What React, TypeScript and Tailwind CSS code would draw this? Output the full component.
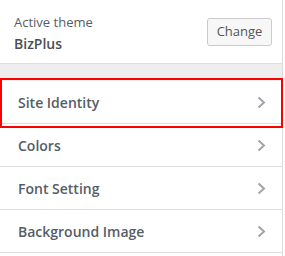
const sections = ['Site Identity', 'Colors', 'Font Setting', 'Background Image'];

function Chevron() {
  return (
    <svg width="9" height="13" viewBox="0 0 9 13" fill="none" className="text-[#a0a5aa]">
      <path d="M1.5 1.5 7 6.5 1.5 11.5" stroke="currentColor" strokeWidth="2" />
    </svg>
  );
}

/** Customizer panel: active theme header and a list of section rows. */
export default function App() {
  return (
    <div className="h-[256px] w-[285px] bg-white" style={{ fontFamily: '"Open Sans", "Noto Sans", sans-serif' }}>
      <div className="relative h-full w-[283px] border-r border-[#dcdcdc] bg-white">
        <div className="flex h-[64px] items-center justify-between border-b border-[#dddddd] bg-white pl-[14px] pr-[10px]">
          <div className="flex flex-col pt-[2px]">
            <span className="text-[13px] leading-[21px] text-[#555d66]">Active theme</span>
            <span className="text-[14px] font-semibold leading-[21px] text-[#4a4f55]">BizPlus</span>
          </div>
          <button className="h-[28px] w-[65px] rounded-[3px] border border-[#cccccc] bg-[#f7f7f7] text-[13px] text-[#555555]">
            Change
          </button>
        </div>

        <div className="h-[17px] bg-[#eeeeee]" />

        <ul>
          {sections.map((s) => (
            <li
              key={s}
              className="flex h-[43px] items-center justify-between border-b border-[#dddddd] bg-white pl-[18px] pr-[16px]"
            >
              <span className="text-[14px] font-semibold text-[#555d66]">{s}</span>
              <Chevron />
            </li>
          ))}
        </ul>

        <div className="pointer-events-none absolute left-0 top-[78px] h-[50px] w-[283px] border-2 border-[#ff0000]" />
      </div>
    </div>
  );
}
